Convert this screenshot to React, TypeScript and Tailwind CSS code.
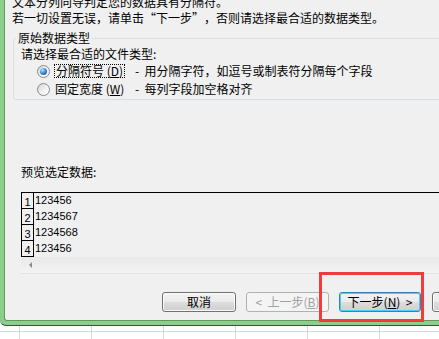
import React from 'react';

const Radio: React.FC<{ checked?: boolean }> = ({ checked }) => (
  <span className="w-[13px] h-[13px] shrink-0 rounded-full border border-[#8a8b8c] bg-[linear-gradient(135deg,#d4d4d4,#f4f4f4_60%,#ffffff)] flex items-center justify-center">
    {checked && (
      <span className="w-[7px] h-[7px] rounded-full bg-[radial-gradient(circle_at_35%_30%,#b9e6ff,#2f7fd0_55%,#17488a)]" />
    )}
  </span>
);

const rows = ['123456', '1234567', '1234568', '123456'];

const App: React.FC = () => {
  return (
    <div lang="zh-CN" className="w-[439px] h-[339px] overflow-hidden bg-white relative text-[12px] text-black font-['Noto_Sans_CJK_SC',sans-serif]">
      {/* dialog window with green frame */}
      <div className="h-[326px] bg-[#8ccf8c] pl-[4px] pb-[4px] rounded-bl-[6px] border-b border-[#3d4f3d] flex">
        <div className="flex-1 bg-[#f0f0f0] border-l border-b border-[#5f9a5f] rounded-bl-[3px] overflow-hidden flex flex-col">
          <div className="mt-[-6px] pl-[7px] leading-[16px] whitespace-nowrap">
            <div>文本分列向导判定您的数据具有分隔符。</div>
            <div>
              若一切设置无误，请单击<span className="inline-block w-[12px] text-right">“</span>下一步
              <span className="inline-block w-[12px] text-left">”</span>，否则请选择最合适的数据类型。
            </div>
          </div>

          {/* group box */}
          <fieldset className="mt-[5px] ml-[8px] w-[520px] shrink-0 border border-[#d5dfe5] rounded-[3px] pb-[1px] whitespace-nowrap">
            <legend className="ml-[2px] px-[2px] leading-[14px]">原始数据类型</legend>
            <div className="mt-[1px] pl-[7px] leading-[16px]">请选择最合适的文件类型:</div>
            <div className="h-[18px] flex items-center pl-[23px]">
              <Radio checked />
              <div className="w-[85px] pl-[4px]">
                <span className="inline-block h-[14px] leading-[12px] border border-dotted border-black px-[1px]">
                  分隔符号 (<u>D</u>)
                </span>
              </div>
              <span>-&nbsp;&nbsp;用分隔字符，如逗号或制表符分隔每个字段</span>
            </div>
            <div className="h-[18px] flex items-center pl-[23px]">
              <Radio />
              <div className="w-[85px] pl-[5px] leading-[14px]">
                固定宽度 (<u>W</u>)
              </div>
              <span>-&nbsp;&nbsp;每列字段加空格对齐</span>
            </div>
          </fieldset>

          <div className="mt-[64px] ml-[16px] leading-[16px]">预览选定数据:</div>

          {/* preview */}
          <div className="mt-[12px] ml-[16px] w-[500px] border-t border-black">
            <div className="h-[64px] overflow-hidden">
              {rows.map((r, i) => (
                <div key={i} className="h-[16px] flex font-['Liberation_Sans',sans-serif] text-[11px]">
                  <div className="w-[13px] border-l border-r border-b border-black flex items-end justify-center leading-[12px]">
                    {i + 1}
                  </div>
                  <div className="pl-[1px] leading-[15px]">{r}</div>
                </div>
              ))}
            </div>
            <div className="h-[17px] bg-[linear-gradient(#e9e9e9,#f3f3f3)] border-b border-[#e2e2e2] flex items-center pl-[8px]">
              <span className="w-0 h-0 border-y-[3px] border-y-transparent border-r-[3px] border-r-[#8a8a8a]" />
            </div>
          </div>

          {/* buttons */}
          <div className="mt-[18px] ml-[157px] flex gap-[10px] whitespace-nowrap">
            <button className="w-[74px] h-[20px] shrink-0 rounded-[3px] border border-[#707070] bg-[linear-gradient(#f2f2f2,#ebebeb_50%,#dddddd_50%,#cfcfcf)] shadow-[inset_0_0_0_1px_#fbfbfb] leading-[18px]">
              取消
            </button>
            <button className="w-[83px] h-[20px] shrink-0 rounded-[3px] border border-[#adb2b5] bg-[#f4f4f4] text-[#a0a0a0] leading-[18px]">
              &lt;&nbsp;&nbsp;上一步(<u>B</u>)
            </button>
            <button className="w-[82px] h-[20px] shrink-0 rounded-[3px] border border-[#3c7fb1] bg-[linear-gradient(#f2f2f2,#ebebeb_50%,#dddddd_50%,#cfcfcf)] shadow-[inset_0_0_0_1px_#48d1f8] leading-[18px]">
              下一步(<u>N</u>)&nbsp;&nbsp;&gt;
            </button>
            <button className="ml-px w-[74px] h-[20px] shrink-0 rounded-[3px] border border-[#707070] bg-[linear-gradient(#f2f2f2,#ebebeb_50%,#dddddd_50%,#cfcfcf)] shadow-[inset_0_0_0_1px_#fbfbfb] leading-[18px]">
              完成
            </button>
          </div>
        </div>
      </div>

      {/* spreadsheet grid below */}
      <div className="flex flex-col">
        {[0, 1].map((r) => (
          <div key={r} className={`flex ${r === 0 ? 'h-[6px] border-b border-[#d0d7e5]' : 'h-[7px]'}`}>
            <div className="w-[20px] shrink-0 border-r border-[#d0d7e5]" />
            {[0, 1, 2, 3, 4, 5].map((c) => (
              <div key={c} className="w-[72px] shrink-0 border-r border-[#d0d7e5]" />
            ))}
          </div>
        ))}
      </div>

      {/* red highlight */}
      <div className="absolute left-[319px] top-[272px] w-[105px] h-[50px] border-[3px] border-[#f23c3c]" />
    </div>
  );
};

export default App;
